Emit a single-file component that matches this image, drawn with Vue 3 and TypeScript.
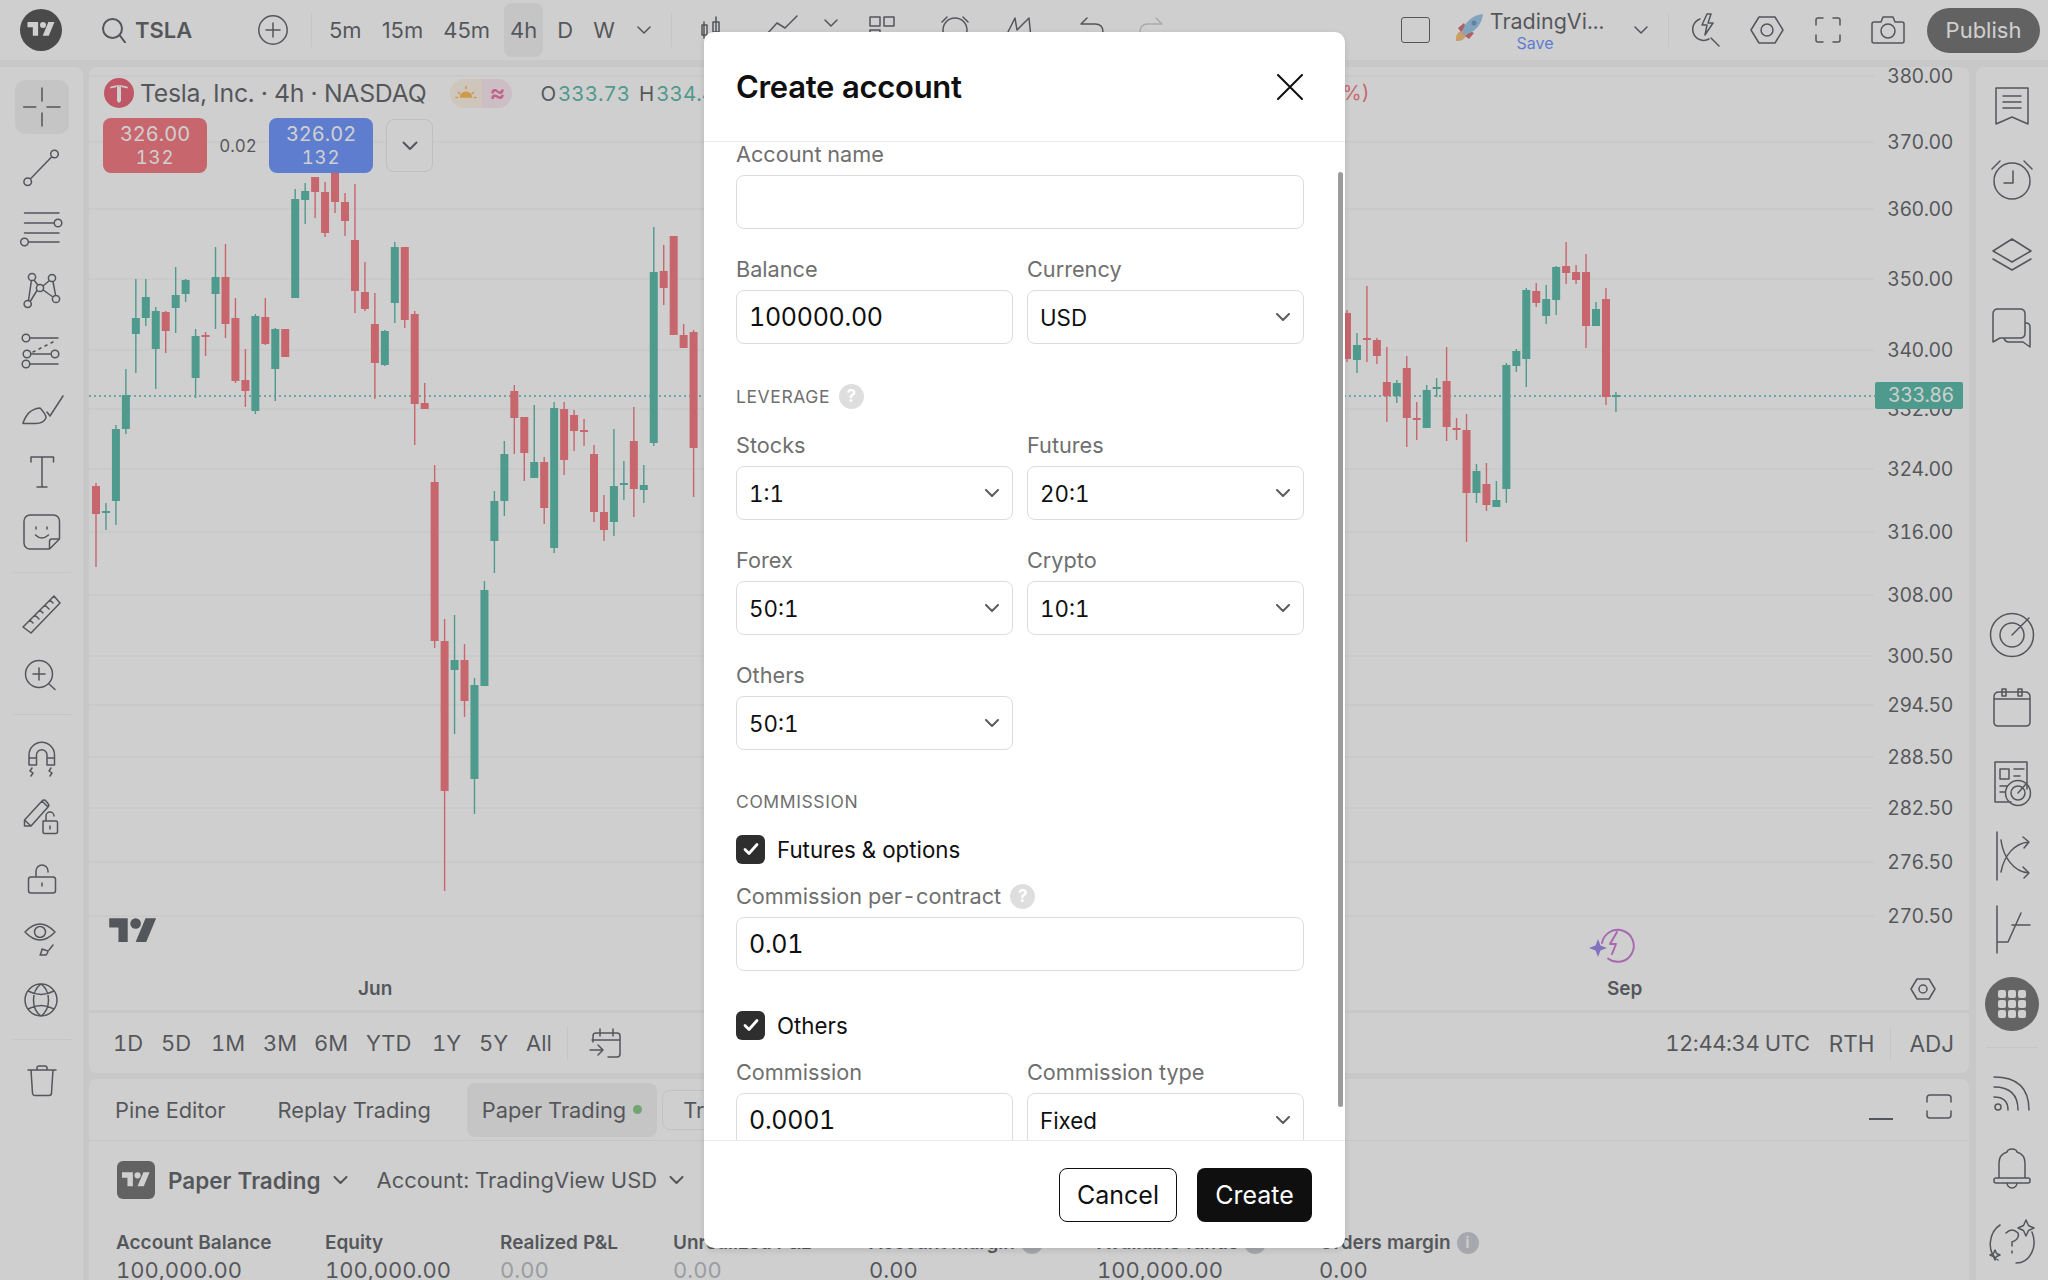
<script setup lang="ts">
type Candle = [number, number, number, number, number] // wick top, body top, body bottom, wick bottom, 1 = green

const circle = (cx: number, cy: number, r: number) =>
  `M${cx - r} ${cy}a${r} ${r} 0 1 0 ${r * 2} 0a${r} ${r} 0 1 0 ${-r * 2} 0`

const leftCandles: Candle[] = [
  [483, 486, 514, 567, 0], [503, 511, 513, 530, 1], [425, 429, 501, 525, 1], [369, 395, 429, 434, 1],
  [279, 318, 334, 373, 1], [279, 297, 318, 326, 1], [307, 311, 349, 389, 1], [311, 312, 331, 353, 0],
  [267, 295, 308, 333, 1], [279, 280, 294, 302, 1], [329, 336, 378, 398, 1], [332, 335, 337, 356, 0],
  [247, 277, 294, 329, 1], [244, 277, 324, 338, 0], [298, 318, 381, 383, 0], [349, 380, 391, 407, 0],
  [314, 316, 411, 414, 1], [298, 317, 344, 345, 0], [328, 329, 369, 401, 1], [329, 329, 357, 357, 0],
  [189, 199, 298, 298, 1], [183, 191, 200, 224, 1], [177, 177, 192, 218, 0], [182, 192, 233, 237, 0],
  [173, 173, 202, 213, 0], [193, 202, 221, 236, 0], [184, 240, 291, 313, 0], [262, 292, 309, 311, 0],
  [293, 324, 363, 399, 0], [330, 331, 365, 366, 1], [242, 247, 303, 323, 1], [247, 247, 320, 328, 0],
  [311, 314, 404, 445, 0], [383, 403, 409, 409, 0], [465, 482, 641, 648, 0], [619, 641, 791, 891, 0],
  [615, 660, 670, 734, 1], [644, 660, 701, 717, 0], [678, 685, 779, 814, 1], [581, 590, 686, 686, 1],
  [491, 501, 541, 573, 1], [441, 454, 501, 516, 1], [385, 391, 418, 454, 0], [417, 417, 453, 481, 0],
  [405, 462, 478, 478, 1], [457, 462, 508, 524, 0], [402, 408, 548, 553, 1], [402, 409, 460, 475, 0],
  [410, 415, 431, 451, 0], [419, 430, 432, 446, 0], [445, 454, 512, 522, 0], [495, 512, 530, 541, 0],
  [429, 486, 522, 536, 1], [461, 483, 485, 500, 1], [407, 441, 489, 517, 0], [465, 485, 490, 503, 1],
  [227, 272, 443, 446, 1], [245, 271, 288, 305, 0], [236, 236, 335, 335, 0], [324, 335, 348, 347, 0],
  [330, 332, 448, 497, 0],
]

const rightCandles: Candle[] = [
  [310, 313, 359, 362, 0], [333, 345, 360, 373, 1], [286, 338, 340, 362, 0], [338, 340, 356, 364, 0],
  [347, 382, 396, 422, 0], [380, 383, 396, 403, 1], [356, 368, 418, 447, 0], [402, 418, 420, 440, 0],
  [385, 390, 428, 428, 1], [378, 387, 389, 397, 1], [347, 381, 427, 441, 0], [418, 428, 430, 440, 0],
  [414, 430, 493, 542, 0], [464, 471, 493, 503, 1], [463, 484, 505, 511, 0], [481, 500, 507, 507, 1],
  [363, 365, 489, 503, 1], [349, 351, 366, 372, 1], [288, 290, 359, 387, 1], [283, 291, 303, 307, 0],
  [285, 299, 316, 324, 1], [266, 267, 300, 315, 1], [242, 266, 273, 284, 0], [265, 272, 280, 284, 0],
  [254, 272, 326, 348, 0], [302, 309, 326, 326, 1], [288, 299, 397, 405, 0], [392, 395, 397, 412, 1],
]

const candles = [
  ...leftCandles.map((c, i) => ({ x: 96 + 9.96 * i, c })),
  ...rightCandles.map((c, i) => ({ x: 1347 + 9.96 * i, c })),
]

const prices = [
  { label: '380.00', y: 76 }, { label: '370.00', y: 142 }, { label: '360.00', y: 209 },
  { label: '350.00', y: 279 }, { label: '340.00', y: 350 }, { label: '332.00', y: 409 },
  { label: '324.00', y: 469 }, { label: '316.00', y: 532 }, { label: '308.00', y: 595 },
  { label: '300.50', y: 656 }, { label: '294.50', y: 705 }, { label: '288.50', y: 757 },
  { label: '282.50', y: 808 }, { label: '276.50', y: 862 }, { label: '270.50', y: 916 },
]

// left toolbar, drawn in a 48 box
const crosshair = 'M5.7 24h12M29 24h13M24 5v13M24 30v13'
const leftGroups: string[][] = [
  [
    crosshair,
    `${circle(9.7, 37.7, 3.8)}M12.3 35L33.8 12.8${circle(36.5, 10, 3.8)}`,
    `M6.5 8H41M6.5 18H36${circle(40, 18, 3.8)}M6.5 28H41M10.3 37H41${circle(6.5, 37, 3.8)}`,
    `${circle(9.7, 38, 3.6)}${circle(14, 11, 3.6)}${circle(34, 12, 3.6)}${circle(38, 33, 3.6)}${circle(22, 22, 3.6)}M10.5 34.5L13.4 14.6M16 14L19.8 19M25 20L31.5 14.5M35 15.5L37.6 29.4M25.2 24L35 31M19 24.5L12.5 35`,
    `${circle(8, 12, 3.8)}M12 12H40${circle(9, 28, 3.8)}M13 28H33${circle(37, 28, 3.8)}${circle(8, 38, 3.8)}M12 38H40M15 26l2-1M21 23l2-1M27 20l2-1M33 17l2-1`,
    'M5 36C8 28 12 22 22 21C26 25 28 28 28 31C26 35 22 36.5 18 36.5H5ZM29 25L32 29L45 9',
    'M13 14V9H35.5V14M24 9V39M19 39H29',
    'M12 7H35.5a6 6 0 0 1 6 6V31L31.5 41H12a6 6 0 0 1-6-6V13a6 6 0 0 1 6-6ZM41.5 31H34a2.5 2.5 0 0 0-2.5 2.5V41M18 19v2M29 19v2M17.5 27q6 6 13 0',
  ],
  [
    'M5 37L36 6L42 13L13 43ZM12 30l3 3M17 25l4 4M22 20l3 3M27 15l4 4M32 10l3 3',
    `${circle(21, 23, 13.5)}M31 33L37 38.5M21 17V29M15 23H27`,
  ],
  [
    'M11 32V22a12.75 12.75 0 0 1 25.5 0V32H29V22a5 5 0 0 0-10.5 0V32ZM11 25H18.5M29 25H36.5M14 35l-2 3 3 2-2 3M33 35l-2 3 3 2-2 3',
    'M6.5 33V27L24 8a2.5 2.5 0 0 1 4 0l2 2.5a2.5 2.5 0 0 1 0 3.5L13 33ZM6.5 27L13 33M24 8l6 6M25 28h13a1.5 1.5 0 0 1 1.5 1.5V39a1.5 1.5 0 0 1-1.5 1.5H26.5A1.5 1.5 0 0 1 25 39ZM28 28v-5a4 4 0 0 1 8 0M32 33v3',
    'M13 23H35a2.5 2.5 0 0 1 2.5 2.5V36.5a2.5 2.5 0 0 1-2.5 2.5H13a2.5 2.5 0 0 1-2.5-2.5V25.5A2.5 2.5 0 0 1 13 23ZM18 23v-6a6 6 0 0 1 12 0v1M24 29v3',
    `M7 17Q22 1 37 17Q22 33 7 17Z${circle(22, 17, 5.5)}M24 34q-1 5-2 6h6q2-2 2-4ZM31 35l4-5`,
    `${circle(23, 25, 16)}M23 9C13 16 13 34 23 41C33 34 33 16 23 9ZM10 16Q23 23 36 16M10 34Q23 27 36 34`,
  ],
  ['M10 15H38M19 15V13a2 2 0 0 1 2-2h6a2 2 0 0 1 2 2v2M13 15L14.5 38a2.5 2.5 0 0 0 2.5 2.5H31a2.5 2.5 0 0 0 2.5-2.5L35 15'],
]

const rightTop: string[] = [
  'M8 6H40V42L24 35L8 42ZM15 14H33M15 20H33M15 26H33',
  `${circle(24, 25, 18)}M25 15V27H16M4 13L12 5M44 13L36 5`,
  'M24 9L43 21L24 32L5 21ZM5 29L24 40L43 29',
  'M5 38V10q0-5 5-5H32q5 0 5 5V29q0 5-5 5H12ZM38 19q4 0 4 4V43L35 38H21q-4 0-5-4',
]

const rightBottom: string[][] = [
  [
    `${circle(24, 25, 21.5)}${circle(24, 25, 12)}M24 25L41 8`,
    'M6 13q0-5 5-5H37q5 0 5 5V38q0 4-4 4H10q-4 0-4-4ZM6 15H42M14 5h4v7h-4ZM30 5h4v7h-4Z',
    `M7 4H39V31M23 44H7V4M12 11H21V21H12ZM26 11H36M26 18H32M12 28H19M12 34H17${circle(30, 35, 12.5)}${circle(30, 35, 7)}M30 35L38 26`,
    'M9 0V48M13 8C15 24 25 40 41 41M13 40C16 24 26 11 41 10M35 5L41 10L36 16M35 35L41 41L36 46',
    'M9 0V47M9 36H20L33 7M24 19H42',
  ],
  [
    `${circle(10, 39, 3)}M6 29q14 0 14 13M6 19q24 0 24 23M6 9q35 0 35 33`,
    'M8 36h32q2 0 2 2v1q0 2-2 2H8q-2 0-2-2v-1q0-2 2-2ZM11 36V21C11 14 16 11 19 10C20 6 28 6 29 10C32 11 37 14 37 21V36M19 41a5 5 0 0 0 10 0',
    'M12 9C1 16-2 36 10 44M28 47C42 47 50 31 44 16M38 4l2.5 5.5L46 12l-5.5 2.5L38 20l-2.5-5.5L30 12l5.5-2.5ZM7 34l1.5 3.5L12 39l-3.5 1.5L7 44l-1.5-3.5L2 39l3.5-1.5ZM18 17q6-6 12 0q2 6-6 9v4M24 35v2',
  ],
]

const ranges = ['1D', '5D', '1M', '3M', '6M', 'YTD', '1Y', '5Y', 'All']

const stats = [
  { label: 'Account Balance', value: '100,000.00' },
  { label: 'Equity', value: '100,000.00' },
  { label: 'Realized P&L', value: '0.00', muted: true },
  { label: 'Unrealized P&L', value: '0.00', muted: true },
  { label: 'Account margin', value: '0.00', info: true },
  { label: 'Available funds', value: '100,000.00', info: true },
  { label: 'Orders margin', value: '0.00', info: true },
]

const leverageRows = [
  [{ label: 'Stocks', value: '1:1' }, { label: 'Futures', value: '20:1' }],
  [{ label: 'Forex', value: '50:1' }, { label: 'Crypto', value: '10:1' }],
  [{ label: 'Others', value: '50:1' }],
]
</script>

<template>
  <div class="page">
    <header class="topbar">
      <div class="top-left">
        <svg class="logo" viewBox="0 0 42 42">
          <circle cx="21" cy="21" r="21" fill="#000" />
          <path fill="#fff" transform="translate(7.5 10) scale(.76)" d="M14 22H7V11H0V4h14v18zM28 22h-8l7.5-18h8L28 22z" />
          <circle cx="23" cy="16" r="3" fill="#fff" />
        </svg>
        <div class="symbol">
          <svg class="ic24" viewBox="0 0 24 24"><path d="M10.5 1a9.5 9.5 0 1 0 0 19a9.5 9.5 0 1 0 0-19M17.5 17l6 8" /></svg>
          <span>TSLA</span>
        </div>
        <svg class="plus" viewBox="0 0 30 30"><path d="M15 .8a14.2 14.2 0 1 0 0 28.4a14.2 14.2 0 1 0 0-28.4M15 8v14M8 15h14" /></svg>
        <i class="vsep" />
        <div class="intervals">
          <span>5m</span><span>15m</span><span>45m</span><span class="active">4h</span><span>D</span><span>W</span>
        </div>
        <svg class="chev" viewBox="0 0 14 8"><path d="M1 1l6 6 6-6" /></svg>
        <i class="vsep sep-b" />
        <svg class="tool first" viewBox="0 0 30 30"><path d="M8 8v16M6 11h5v10H6zM20 3v18M17 8h6v10h-6z" /></svg>
        <svg class="tool second" viewBox="0 0 34 30"><path d="M2 20L12 9L20 14L32 2" /></svg>
        <svg class="chev chev-ind" viewBox="0 0 14 8"><path d="M1 1l6 6 6-6" /></svg>
        <svg class="tool third" viewBox="0 0 30 30"><path d="M3 3h10v9H3zM17 3h10v9H17zM3 16h10v9H3z" /></svg>
        <svg class="tool fourth" viewBox="0 0 34 30"><path d="M17 4a11 11 0 1 0 0 24a11 11 0 1 0 0-24M4 8l5-5M30 8l-5-5" /></svg>
        <svg class="tool fifth" viewBox="0 0 34 30"><path d="M4 24L14 4L16 16L28 4L30 24" /></svg>
        <svg class="tool sixth" viewBox="0 0 30 30"><path d="M5 10h14q8 0 8 8M5 10l6-6" /></svg>
        <svg class="tool seventh faint" viewBox="0 0 30 30"><path d="M25 10H11q-8 0-8 8M25 10l-6-6" /></svg>
      </div>
      <div class="top-right">
        <span class="square" />
        <svg class="rocket" viewBox="0 0 30 30">
          <path d="M2 26C2 21 4 19 8 18L12 22C11 26 8 28 2 28Z" fill="#f4a23c" />
          <path d="M4 15L10 10L12 14L7 19ZM15 26L20 20L16 18L11 23Z" fill="#c1272d" />
          <path d="M8 20C10 9 19 2 29 1C28 11 21 20 10 22Z" fill="#6aaee0" />
          <circle cx="20" cy="10" r="2.5" fill="#2f6a9e" />
        </svg>
        <div class="layout-name">
          <span class="layout-title">TradingVi...</span>
          <span class="layout-save">Save</span>
        </div>
        <svg class="chev chev-layout" viewBox="0 0 14 8"><path d="M1 1l6 6 6-6" /></svg>
        <i class="vsep sep-c" />
        <svg class="top-ic bolt" viewBox="0 0 30 34">
          <path d="M10 6a11 11 0 1 0 9 20M21 25l8 8M17 1l-5 11h5l-2 10l8-12h-5l3-9z" />
        </svg>
        <svg class="top-ic hex" viewBox="0 0 34 28"><path d="M9 1H25L33 14L25 27H9L1 14ZM17 8a6 6 0 1 0 0 12a6 6 0 1 0 0-12" /></svg>
        <svg class="top-ic full" viewBox="0 0 26 26"><path d="M1 8V3q0-2 2-2H8M18 1h5q2 0 2 2V8M25 18v5q0 2-2 2H18M8 25H3q-2 0-2-2V18" /></svg>
        <svg class="top-ic cam" viewBox="0 0 34 28">
          <path d="M3 6H10L12 1H22L24 6H31q2 0 2 2V25q0 2-2 2H3q-2 0-2-2V8q0-2 2-2ZM17 8a7 7 0 1 0 0 14a7 7 0 1 0 0-14" />
        </svg>
        <button class="publish">Publish</button>
      </div>
    </header>

    <div class="workspace">
      <aside class="left-tools">
        <template v-for="(group, gi) in leftGroups" :key="gi">
          <i v-if="gi > 0" class="hsep" :class="{ last: gi === 3 }" />
          <div v-for="(d, di) in group" :key="di" class="left-item" :class="{ picked: d === crosshair }">
            <svg viewBox="0 0 48 48"><path :d="d" /></svg>
          </div>
        </template>
      </aside>

      <main class="center">
        <section class="chart">
          <svg class="plot" viewBox="89 67 1880 943" width="1880" height="943">
            <line v-for="p in prices" :key="p.label" x1="89" x2="1874" :y1="p.y" :y2="p.y" stroke="#f2f2f2" stroke-width="1.5" />
            <line x1="89" x2="1876" y1="396" y2="396" stroke="#089981" stroke-width="1.5" stroke-dasharray="2 3" />
            <g v-for="k in candles" :key="k.x" :fill="k.c[4] ? '#089981' : '#f23645'">
              <rect :x="k.x - 0.7" :y="k.c[0]" width="1.4" :height="k.c[3] - k.c[0]" />
              <rect :x="k.x - 4" :y="k.c[1]" width="8" :height="k.c[2] - k.c[1]" />
            </g>
          </svg>

          <div class="legend">
            <svg class="tesla" viewBox="0 0 30 30">
              <circle cx="15" cy="15" r="15" fill="#e31937" />
              <path fill="#fff" d="M15 9l2-1v15l-2 2l-2-2V8zM6 9c6-2.5 12-2.5 18 0l-.6 1.5c-2-1-3.5-1-5.4-1V8.500h-6V9.500c-2 0-3.400 0-5.400 1z" />
            </svg>
            <span class="legend-title">Tesla, Inc. · 4h · NASDAQ</span>
            <span class="status">
              <span class="status-sun">
                <svg viewBox="0 0 20 16"><path fill="#ff9800" d="M4 12a6 6 0 0 1 12 0zM9.300 1h1.400v3H9.300zM2 7l1-1 2 2-1 1zM18 7l-1-1-2 2 1 1zM0 11h2.500v1.500H0zM17.500 11H20v1.500h-2.500z" /></svg>
              </span>
              <span class="status-wave">≈</span>
            </span>
            <span class="ohlc"><b>O</b>333.73</span>
            <span class="ohlc ohlc-h"><b>H</b>334.44</span>
          </div>
          <span class="legend-pct">%)</span>

          <div class="trade">
            <div class="trade-btn sell"><span>326.00</span><small>132</small></div>
            <span class="spread">0.02</span>
            <div class="trade-btn buy"><span>326.02</span><small>132</small></div>
            <div class="trade-more"><svg viewBox="0 0 16 10"><path d="M1.500 1.500L8 8l6.500-6.500" /></svg></div>
          </div>

          <span v-for="p in prices" :key="p.label" class="price" :style="{ top: p.y - 66 + 'px' }">{{ p.label }}</span>
          <span class="price-now">333.86</span>

          <svg class="mark" viewBox="0 0 36 28"><path fill="#131722" d="M14 22H7V11H0V4h14v18zM28 22h-8l7.500-18h8L28 22z" /><circle cx="20" cy="8" r="4" fill="#131722" /></svg>

          <span class="month jun">Jun</span>
          <span class="month sep-m">Sep</span>
          <svg class="spark" viewBox="0 0 42 36">
            <path fill="none" stroke="#b53cc4" stroke-width="2" d="M12 17a16 16 0 1 1 6 15.500M27 6l-7 12h6l-4 10" />
            <path fill="#6b4ee0" d="M8 13l2.500 6.500L17 22l-6.500 2.500L8 31l-2.500-6.500L-1 22l6.500-2.500z" />
          </svg>
          <svg class="axis-gear" viewBox="0 0 26 22"><path d="M7 1H19L25 11L19 21H7L1 11ZM13 7a4 4 0 1 0 0 8a4 4 0 1 0 0-8" /></svg>
        </section>

        <section class="ranges">
          <div class="ranges-left">
            <div class="range-list"><span v-for="r in ranges" :key="r">{{ r }}</span></div>
            <i class="vsep sep-range" />
            <svg class="goto" viewBox="0 0 32 30"><path d="M4 14V8q0-3 3-3H28q3 0 3 3V26q0 3-3 3H19M3 12H31M11 1V8M24 1V8M1 22H14M9 17l5 5-5 5" /></svg>
          </div>
          <div class="ranges-right">
            <span class="clock">12:44:34 UTC</span><span class="rth">RTH</span><i class="vsep sep-adj" /><span class="adj">ADJ</span>
          </div>
        </section>

        <section class="bottom">
          <nav class="tabs">
            <span class="tab">Pine Editor</span>
            <span class="tab">Replay Trading</span>
            <span class="tab on">Paper Trading<i class="dot" /></span>
            <span class="tab boxed">Trade</span>
            <div class="tab-tools">
              <i class="minimize" />
              <svg class="maximize" viewBox="0 0 26 25"><path d="M1 8V4q0-3 3-3H22q3 0 3 3V8M25 17V21q0 3-3 3H4q-3 0-3-3V17" /></svg>
            </div>
          </nav>
          <div class="broker">
            <span class="broker-logo">
              <svg viewBox="0 0 36 28"><path fill="#fff" d="M14 22H7V11H0V4h14v18zM28 22h-8l7.500-18h8L28 22z" /><circle cx="20" cy="8" r="4" fill="#fff" /></svg>
            </span>
            <b>Paper Trading</b>
            <svg class="chev chev-broker" viewBox="0 0 14 8"><path d="M1 1l6 6 6-6" /></svg>
            <span class="account">Account: TradingView USD</span>
            <svg class="chev chev-broker" viewBox="0 0 14 8"><path d="M1 1l6 6 6-6" /></svg>
          </div>
          <div class="stats">
            <div v-for="s in stats" :key="s.label">
              <p class="stat-label">{{ s.label }}<i v-if="s.info" class="info">i</i></p>
              <p class="stat-value" :class="{ muted: s.muted }">{{ s.value }}</p>
            </div>
          </div>
        </section>
      </main>

      <aside class="right-tools">
        <div v-for="d in rightTop" :key="d" class="right-item"><svg viewBox="0 0 48 48"><path :d="d" /></svg></div>
        <div class="right-lower">
          <div v-for="d in rightBottom[0]" :key="d" class="right-item"><svg viewBox="0 0 48 48"><path :d="d" /></svg></div>
          <div class="right-item">
            <svg class="apps" viewBox="0 0 54 54">
              <circle cx="27" cy="27" r="27" fill="#333" />
              <g fill="#fff">
                <template v-for="row in [14, 24, 34]" :key="row">
                  <rect v-for="col in [14, 24, 34]" :key="col" :x="col - 1" :y="row - 1" width="8" height="8" rx="2" />
                </template>
              </g>
            </svg>
          </div>
          <i class="hsep wide" />
          <div v-for="d in rightBottom[1]" :key="d" class="right-item"><svg viewBox="0 0 48 48"><path :d="d" /></svg></div>
        </div>
      </aside>
    </div>

    <div class="overlay" />

    <div class="modal">
      <div class="modal-head">
        <h2>Create account</h2>
        <svg class="close" viewBox="0 0 26 26"><path d="M1 1L25 25M25 1L1 25" /></svg>
      </div>
      <div class="modal-body">
        <div class="field first-field">
          <label>Account name</label>
          <div class="input" />
        </div>
        <div class="two gap-row">
          <div class="field">
            <label>Balance</label>
            <div class="input">100000.00</div>
          </div>
          <div class="field">
            <label>Currency</label>
            <div class="input select small">USD<svg viewBox="0 0 14 8"><path d="M1 1l6 6 6-6" /></svg></div>
          </div>
        </div>

        <div class="section leverage">LEVERAGE <i class="q">?</i></div>
        <div v-for="(row, ri) in leverageRows" :key="ri" class="two" :class="{ 'gap-row': ri > 0 }">
          <div v-for="f in row" :key="f.label" class="field">
            <label>{{ f.label }}</label>
            <div class="input select small">{{ f.value }}<svg viewBox="0 0 14 8"><path d="M1 1l6 6 6-6" /></svg></div>
          </div>
        </div>

        <div class="section commission">COMMISSION</div>
        <div class="check first-check">
          <span class="box"><svg viewBox="0 0 16 14"><path d="M2 7.500L6 11.500L14 2.500" /></svg></span>Futures &amp; options
        </div>
        <div class="field per-contract">
          <label>Commission per-contract <i class="q">?</i></label>
          <div class="input">0.01</div>
        </div>
        <div class="check second-check">
          <span class="box"><svg viewBox="0 0 16 14"><path d="M2 7.500L6 11.500L14 2.500" /></svg></span>Others
        </div>
        <div class="two last-row">
          <div class="field">
            <label>Commission</label>
            <div class="input">0.0001</div>
          </div>
          <div class="field">
            <label>Commission type</label>
            <div class="input select small">Fixed<svg viewBox="0 0 14 8"><path d="M1 1l6 6 6-6" /></svg></div>
          </div>
        </div>
        <span class="scroll-thumb" />
      </div>
      <div class="modal-foot">
        <button class="btn ghost">Cancel</button>
        <button class="btn solid">Create</button>
      </div>
    </div>
  </div>
</template>

<style>
html, body { margin: 0; background: #f2f2f2; }
</style>

<style scoped>
* { box-sizing: border-box; }
p, h2 { margin: 0; }
i { font-style: normal; }
svg { display: block; fill: none; stroke: #131722; stroke-width: 1.5; stroke-linecap: round; stroke-linejoin: round; flex: none; }

.page {
  position: relative;
  width: 2048px;
  height: 1280px;
  overflow: hidden;
  background: #f2f2f2;
  font-family: Inter, "Liberation Sans", sans-serif;
  font-variant-numeric: tabular-nums;
  color: #131722;
  display: flex;
  flex-direction: column;
}

/* top bar */
.topbar { height: 60px; background: #fff; display: flex; justify-content: space-between; align-items: center; flex: none; }
.top-left, .top-right { display: flex; align-items: center; height: 100%; }
.logo { width: 42px; height: 42px; margin-left: 20px; stroke: none; }
.logo path, .logo circle { stroke: none; }
.symbol { display: flex; align-items: center; gap: 9px; margin-left: 40px; width: 156px; font-size: 22px; font-weight: 600; }
.ic24 { width: 24px; height: 26px; stroke-width: 2; }
.plus { width: 30px; height: 30px; stroke-width: 1.500; }
.vsep { display: block; width: 1px; background: #ececec; flex: none; }
.top-left > .vsep { height: 34px; margin-left: 23px; }
.intervals { display: flex; align-items: center; height: 100%; margin-left: 11px; gap: 8px; font-size: 22px; font-variant-numeric: normal; }
.intervals span { height: 54px; padding: 0 6px; display: flex; align-items: center; border-radius: 8px; }
.intervals .active { background: #ebebeb; }
.chev { width: 14px; height: 8px; }
.top-left > .chev { margin-left: 16px; }
.top-left > .sep-b { margin-left: 20px; }
.tool { width: 30px; height: 30px; margin-top: -2px; }
.first { margin-left: 24px; }
.second { margin-left: 39px; width: 34px; }
.top-left > .chev-ind { margin-left: 25px; margin-top: -14px; }
.third { margin-left: 29px; }
.fourth { margin-left: 41px; width: 34px; }
.fifth { margin-left: 29px; width: 34px; }
.sixth { margin-left: 41px; }
.seventh { margin-left: 31px; }
.faint { stroke: #b8bac2; }

.square { width: 29px; height: 26px; border: 1.500px solid #131722; border-radius: 3px; }
.rocket { width: 30px; height: 30px; margin: -4px 0 0 24px; stroke: none; }
.rocket path, .rocket circle { stroke: none; }
.layout-name { display: flex; flex-direction: column; align-items: center; width: 116px; margin-left: 5px; line-height: 1; }
.layout-title { font-size: 21.500px; margin-top: 2px; }
.layout-save { font-size: 16px; color: #2962ff; margin-top: 3px; margin-right: 24px; }
.chev-layout { margin-left: 29px; }
.sep-c { height: 34px; margin-left: 20px; }
.top-ic { height: 34px; }
.bolt { width: 30px; margin-left: 21px; }
.hex { width: 34px; height: 28px; margin-left: 30px; }
.full { width: 26px; height: 26px; margin-left: 31px; }
.cam { width: 34px; height: 28px; margin-left: 30px; }
.publish {
  width: 113px; height: 45px; margin: 0 8px 0 22px; border: 0; border-radius: 23px;
  background: #2e2e2e; color: #fff; font: 22px Inter, sans-serif;
}

/* main columns */
.workspace { flex: 1; display: flex; padding-top: 7px; min-height: 0; }
.left-tools { width: 83px; background: #fff; border-top-right-radius: 8px; padding-top: 10px; display: flex; flex-direction: column; align-items: center; flex: none; }
.left-item { width: 54px; height: 60.700px; display: flex; align-items: center; justify-content: center; border-radius: 10px; }
.left-item.picked { background: #ebebeb; height: 54px; margin: 3px 0 4px; }
.left-item svg { width: 48px; height: 48px; }
.hsep { display: block; width: 58px; height: 1px; background: #ececec; margin: 9px 0 11px; flex: none; }
.hsep.last { margin-bottom: 9px; }

.center { width: 1880px; margin-left: 6px; display: flex; flex-direction: column; flex: none; }
.chart { position: relative; height: 943px; background: #fff; border-radius: 8px 8px 0 0; flex: none; overflow: hidden; }
.plot { position: absolute; left: 0; top: 0; stroke: none; }
.plot line { stroke-linecap: butt; }
.plot rect { stroke: none; }

.legend { position: absolute; left: 15px; top: 11px; display: flex; align-items: center; height: 30px; white-space: nowrap; }
.tesla { width: 30px; height: 30px; }
.tesla circle, .tesla path { stroke: none; }
.legend-title { font-size: 24.800px; margin-left: 6px; letter-spacing: -.25px; }
.status { display: flex; height: 29px; margin-left: 24px; border-radius: 15px; overflow: hidden; }
.status-sun { width: 32px; background: #fdeedc; display: flex; align-items: center; justify-content: center; }
.status-sun svg { width: 22px; height: 17px; stroke: none; }
.status-sun path { stroke: none; }
.status-wave { width: 30px; background: #fbdcea; color: #e0307e; font-size: 24px; font-weight: 600; text-align: center; line-height: 27px; }
.ohlc { font-size: 20.500px; color: #089981; margin-left: 28px; }
.ohlc b { font-weight: 400; color: #131722; margin-right: 2px; }
.ohlc-h { margin-left: 9px; }
.legend-pct { position: absolute; left: 1253px; top: 14px; font-size: 20px; color: #f23645; }

.trade { position: absolute; left: 14px; top: 51px; display: flex; align-items: center; }
.trade-btn { width: 104px; height: 55px; border-radius: 8px; color: #fff; display: flex; flex-direction: column; align-items: center; justify-content: center; line-height: 1; }
.trade-btn span { font-size: 20px; margin-bottom: 4px; }
.trade-btn small { font-size: 18.500px; letter-spacing: .8px; }
.sell { background: #f23645; }
.buy { background: #2962ff; }
.spread { width: 62px; text-align: center; font-size: 17px; }
.trade-more { width: 47px; height: 53px; margin-left: 13px; background: #fff; border: 1.500px solid #e0e0e0; border-radius: 8px; display: flex; align-items: center; justify-content: center; }
.trade-more svg { width: 16px; height: 10px; stroke-width: 2; }

.price { position: absolute; right: 16px; transform: translateY(-50%); font-size: 19.500px; letter-spacing: -.45px; line-height: 1; }
.price-now {
  position: absolute; left: 1786px; top: 315px; width: 88px; height: 27px; background: #089981; color: #fff;
  font-size: 19.500px; letter-spacing: -.45px; line-height: 27px; padding-left: 13px; border-radius: 2px;
}
.mark { position: absolute; left: 20px; top: 846px; width: 48px; height: 37px; stroke: none; }
.mark path, .mark circle { stroke: none; }
.month { position: absolute; top: 912px; font-size: 19px; font-weight: 600; line-height: 20px; }
.jun { left: 269px; }
.sep-m { left: 1518px; }
.spark { position: absolute; left: 1501px; top: 859px; width: 42px; height: 36px; overflow: visible; }
.spark path { stroke-linecap: round; }
.spark path:last-child { stroke: none; }
.axis-gear { position: absolute; left: 1821px; top: 911px; width: 26px; height: 22px; }

.ranges { height: 63px; background: #fff; border-top: 3px solid #f2f2f2; border-radius: 0 0 8px 8px; display: flex; align-items: center; justify-content: space-between; flex: none; font-size: 22px; }
.ranges-left { display: flex; align-items: center; margin-left: 24px; }
.range-list { display: grid; grid-template-columns: 48px 50px 52px 51px 52px 66px 47px 47px 41px; }
.sep-range { height: 34px; }
.goto { width: 32px; height: 30px; margin-left: 21px; }
.ranges-right { display: flex; align-items: center; margin-right: 15px; }
.clock { letter-spacing: -.4px; }
.rth { margin-left: 19px; font-size: 22.500px; }
.adj { font-size: 22.500px; }
.sep-adj { height: 34px; margin: 0 18px 0 16px; }

.bottom { margin-top: 6px; flex: 1; background: #fff; border-radius: 8px 8px 0 0; min-height: 0; overflow: hidden; }
.tabs { height: 62px; display: flex; align-items: center; border-bottom: 1.500px solid #ececec; font-size: 21.800px; padding-left: 26px; }
.tab { white-space: nowrap; margin-right: 52px; }
.tab.on { height: 54px; background: #ebebeb; border-radius: 8px; display: flex; align-items: center; padding: 0 15px; margin: 0 5px 0 -16px; }
.dot { width: 9px; height: 9px; border-radius: 50%; background: #4caf50; margin-left: 7px; }
.boxed { border: 1.500px solid #e6e6e6; border-radius: 8px; padding: 6px 20px; margin-right: 0; }
.tab-tools { margin-left: auto; display: flex; align-items: center; margin-right: 17px; }
.minimize { display: block; width: 24px; height: 2px; background: #131722; margin-top: 18px; }
.maximize { width: 26px; height: 25px; margin-left: 33px; margin-top: -6px; }

.broker { height: 76px; display: flex; align-items: center; padding: 2px 0 0 28px; font-size: 22px; }
.broker-logo { width: 38px; height: 38px; background: #2e2e2e; border-radius: 6px; display: flex; align-items: center; justify-content: center; }
.broker-logo svg { width: 28px; height: 22px; stroke: none; }
.broker-logo path, .broker-logo circle { stroke: none; }
.broker b { font-weight: 600; margin-left: 13px; font-size: 22.500px; }
.chev-broker { width: 15px; height: 8px; margin-left: 12px; stroke-width: 2; }
.account { margin-left: 29px; }

.stats { display: grid; grid-template-columns: 209px 175px 173px 196px 228px 222px auto; padding: 13px 0 0 27px; }
.stat-label { font-size: 19px; font-weight: 600; line-height: 26px; white-space: nowrap; display: flex; align-items: center; gap: 6px; }
.stat-value { font-size: 22px; line-height: 28px; white-space: nowrap; }
.muted { color: #9aa0aa; }
.info { display: block; width: 22px; height: 22px; border-radius: 50%; background: #b2b5be; color: #fff; font-size: 15px; line-height: 22px; text-align: center; font-weight: 600; }

.right-tools { width: 72px; margin-left: 7px; background: #fff; border-top-left-radius: 8px; padding-top: 2px; display: flex; flex-direction: column; align-items: center; flex: none; }
.right-item { height: 74px; display: flex; align-items: center; justify-content: center; }
.right-item svg { width: 48px; height: 48px; overflow: visible; }
.right-item svg.apps { width: 54px; height: 54px; stroke: none; }
.apps circle, .apps rect { stroke: none; }
.right-lower { margin-top: auto; display: flex; flex-direction: column; align-items: center; padding-bottom: 3px; }
.hsep.wide { width: 52px; margin: 6px 0 7px; }

/* dialog */
.overlay { position: absolute; inset: 0; background: rgba(154, 154, 154, .48); }
.modal {
  position: absolute; left: 704px; top: 32px; width: 641px; height: 1216px; background: #fff; border-radius: 10px;
  display: flex; flex-direction: column; box-shadow: 0 2px 6px rgba(0, 0, 0, .12); color: #0f0f0f;
}
.modal-head { height: 110px; border-bottom: 1.500px solid #ebebeb; display: flex; align-items: center; justify-content: space-between; padding: 0 42px 0 32px; flex: none; }
h2 { font-size: 31px; font-weight: 600; letter-spacing: -.3px; }
.close { width: 26px; height: 26px; stroke: #0f0f0f; stroke-width: 2; }
.modal-body { position: relative; height: 998px; padding: 0 41px 0 32px; overflow: hidden; flex: none; }
.scroll-thumb { position: absolute; right: 2px; top: 30px; bottom: 33px; width: 5px; border-radius: 3px; background: #9b9b9b; }
.field { display: flex; flex-direction: column; gap: 8px; min-width: 0; }
.first-field { margin-top: -1px; }
.field label { height: 26px; line-height: 26px; font-size: 21.700px; color: #6f6f6f; display: flex; align-items: center; white-space: nowrap; }
.input { height: 54px; border: 1.500px solid #dcdcdc; border-radius: 8px; padding: 0 12px; font-size: 25px; letter-spacing: -.3px; line-height: 51px; display: flex; align-items: center; justify-content: space-between; }
.small { font-size: 22.300px; letter-spacing: 0; padding-right: 13px; }
.select svg { width: 14px; height: 8px; stroke-width: 2; stroke: #5d5d5d; }
.two { display: grid; grid-template-columns: 277px 277px; column-gap: 14px; }
.gap-row { margin-top: 27px; }
.section { height: 26px; font-size: 17.500px; letter-spacing: .6px; color: #6f6f6f; display: flex; align-items: center; }
.q { display: block; width: 25px; height: 25px; border-radius: 50%; background: #dedede; color: #fff; font-size: 17px; font-weight: 700; line-height: 25px; text-align: center; margin-left: 9px; }
.leverage { margin: 39px 0 23px; }
.commission { margin: 38px 0 0; }
.check { display: flex; align-items: center; font-size: 22.300px; height: 30px; }
.box { width: 29px; height: 29px; border-radius: 6px; background: #2e2e2e; display: flex; align-items: center; justify-content: center; margin: 0 12px 0 0; }
.box svg { width: 16px; height: 14px; stroke: #fff; stroke-width: 2.800; }
.first-check { margin-top: 20px; }
.per-contract { margin-top: 19px; }
.per-contract label .q { margin-left: 9px; }
.second-check { margin-top: 39px; }
.last-row { margin-top: 19px; }
.modal-foot { flex: 1; border-top: 1.500px solid #ebebeb; display: flex; justify-content: flex-end; align-items: flex-start; gap: 20px; padding: 27px 33px 0 0; }
.btn { height: 54px; border-radius: 8px; font: 25px Inter, sans-serif; }
.ghost { width: 118px; background: #fff; border: 1.500px solid #0f0f0f; color: #0f0f0f; }
.solid { width: 115px; background: #0f0f0f; border: 0; color: #fff; }
</style>
